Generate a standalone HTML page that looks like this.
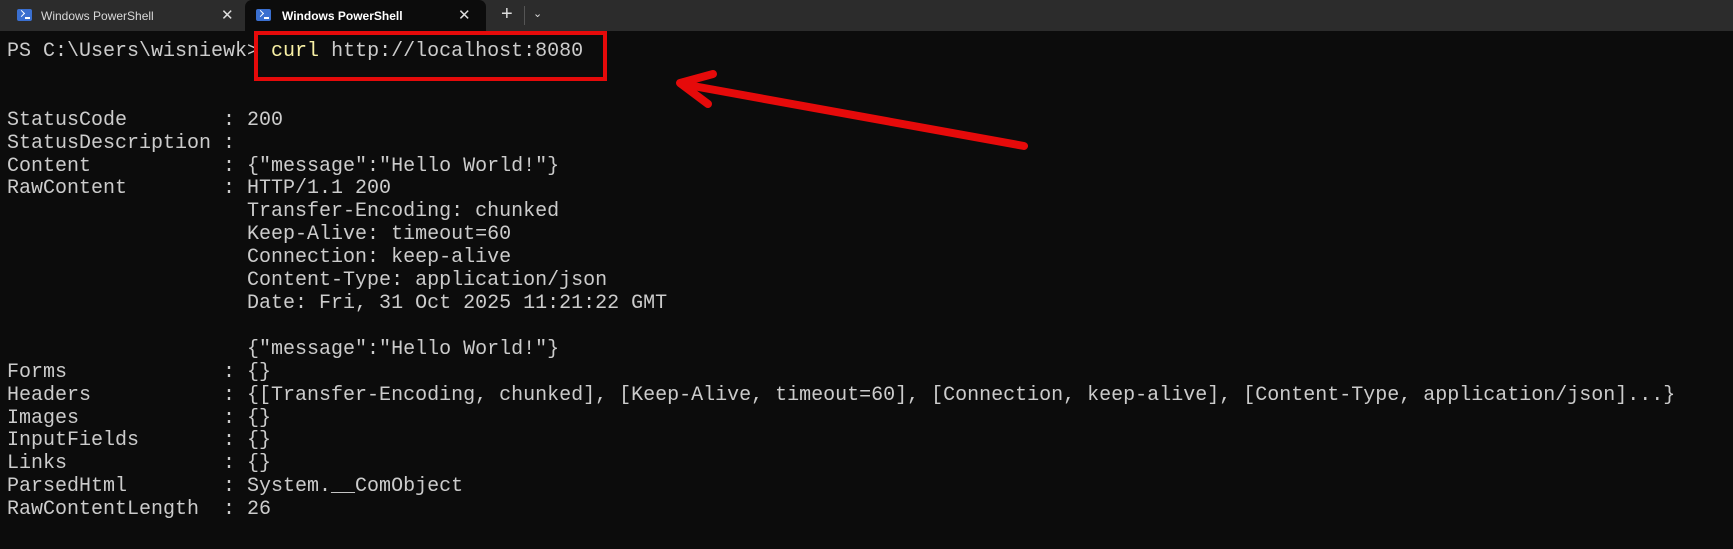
<!DOCTYPE html>
<html><head><meta charset="utf-8"><style>
html,body{margin:0;padding:0;width:1733px;height:549px;overflow:hidden;background:#0c0c0c;position:relative}
.bar{position:absolute;left:0;top:0;width:1733px;height:31px;background:#2c2c2c}
.tab{position:absolute;top:0;height:31px;font:12px "Liberation Sans",sans-serif;color:#d8d8d8}
.tab span{position:absolute;top:9px}
.act{background:#0c0c0c;border-radius:7px 7px 0 0;color:#fff;font-weight:bold}
.ico{position:absolute;top:9px;width:15px;height:12px;background:#3a6fd0;border-radius:2px}
.ico:after{content:"";position:absolute;left:2px;top:2px;width:4px;height:4px;border-right:1.5px solid #fff;border-bottom:1.5px solid #fff;transform:rotate(-45deg)}
.ico:before{content:"";position:absolute;left:8px;top:8px;width:5px;height:1.5px;background:#fff}
.x{position:absolute;top:6px;font:15px "Liberation Sans",sans-serif;color:#ddd;font-weight:normal}
pre{position:absolute;left:7px;top:41px;margin:0;font:20px/22.9px "Liberation Mono",monospace;color:#cccccc;white-space:pre}
.y{color:#f9f1a5}
</style></head><body>
<div class="bar"></div>
<div class="tab" style="left:0;width:245px"><div class="ico" style="left:17px"></div><span style="left:41px">Windows PowerShell</span><div class="x" style="left:221px">✕</div></div>
<div class="tab act" style="left:245px;width:241px"><div class="ico" style="left:11px"></div><span style="left:37px">Windows PowerShell</span><div class="x" style="left:213px">✕</div></div>
<div style="position:absolute;left:501px;top:3px;font:20px 'Liberation Sans',sans-serif;color:#ddd">+</div>
<div style="position:absolute;left:524px;top:6px;width:1px;height:19px;background:#555"></div>
<div style="position:absolute;left:533px;top:7px;font:11px 'Liberation Sans',sans-serif;color:#ddd">&#8964;</div>
<pre>PS C:\Users\wisniewk&gt; <span class="y">curl</span> http://localhost:8080


StatusCode        : 200
StatusDescription :
Content           : {"message":"Hello World!"}
RawContent        : HTTP/1.1 200
                    Transfer-Encoding: chunked
                    Keep-Alive: timeout=60
                    Connection: keep-alive
                    Content-Type: application/json
                    Date: Fri, 31 Oct 2025 11:21:22 GMT

                    {"message":"Hello World!"}
Forms             : {}
Headers           : {[Transfer-Encoding, chunked], [Keep-Alive, timeout=60], [Connection, keep-alive], [Content-Type, application/json]...}
Images            : {}
InputFields       : {}
Links             : {}
ParsedHtml        : System.__ComObject
RawContentLength  : 26</pre>
<div style="position:absolute;left:254px;top:31px;width:345px;height:42px;border:4px solid #e60a0a"></div>
<svg style="position:absolute;left:0;top:0" width="1733" height="549"><g stroke="#e60a0a" stroke-width="8" stroke-linecap="round" stroke-linejoin="round" fill="none"><path d="M1024 146 L682 84"/><path d="M713 74 L680 83 L708 104"/></g></svg>
</body></html>
